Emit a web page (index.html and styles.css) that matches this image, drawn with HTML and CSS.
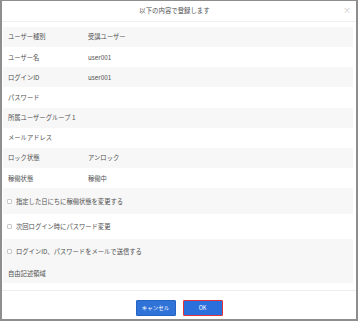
FILE: index.html
```html
<!DOCTYPE html>
<html lang="ja">
<head>
<meta charset="utf-8">
<link rel="stylesheet" href="styles.css">
</head>
<body>
<div class="modal">
  <div class="header">
    <span class="title">以下の内容で登録します</span>
    <span class="close">×</span>
  </div>
  <div class="body">
    <div class="row alt"><span class="label">ユーザー種別</span><span class="value">受講ユーザー</span></div>
    <div class="row"><span class="label">ユーザー名</span><span class="value">user001</span></div>
    <div class="row alt"><span class="label">ログインID</span><span class="value">user001</span></div>
    <div class="row"><span class="label">パスワード</span><span class="value"></span></div>
    <div class="row alt"><span class="label">所属ユーザーグループ 1</span><span class="value"></span></div>
    <div class="row"><span class="label">メールアドレス</span><span class="value"></span></div>
    <div class="row alt"><span class="label">ロック状態</span><span class="value">アンロック</span></div>
    <div class="row"><span class="label">稼働状態</span><span class="value">稼働中</span></div>
    <div class="row check alt c1"><span class="box"></span><span>指定した日にちに稼働状態を変更する</span></div>
    <div class="row check c2"><span class="box"></span><span>次回ログイン時にパスワード変更</span></div>
    <div class="group alt">
      <div class="row check c3"><span class="box"></span><span>ログインID、パスワードをメールで送信する</span></div>
      <div class="row free"><span class="label">自由記述領域</span></div>
    </div>
  </div>
  <div class="footer">
    <button class="btn cancel">キャンセル</button>
    <button class="btn ok">OK</button>
  </div>
</div>
</body>
</html>
```

FILE: styles.css
```css
* { box-sizing: border-box; }
html, body { margin: 0; padding: 0; background: #fff; }
body {
  font-family: "Noto Sans CJK JP", "Noto Sans", sans-serif;
  color: #505050;
}
.modal {
  width: 358px;
  height: 321px;
  border: 2px solid #8e8e8e;
  border-top-width: 1px;
  background: #fff;
  display: flex;
  flex-direction: column;
}
.header {
  height: 21px;
  border-bottom: 1px solid #efefef;
  display: flex;
  align-items: center;
  justify-content: center;
  position: relative;
  padding-right: 9px;
}
.title {
  font-size: 6.4px;
  color: #505050;
}
.close {
  position: absolute;
  right: 5px;
  top: 4px;
  font-size: 8px;
  color: #c4c4c4;
  line-height: 10px;
}
.body {
  padding: 5px 3px 7px 1px;
  flex: 1;
  display: flex;
  flex-direction: column;
}
.row {
  height: 20.2px;
  display: flex;
  align-items: center;
  padding-left: 5px;
  font-size: 6.3px;
}
.alt { background: #f7f7f7; }
.group .row { background: transparent; }
.label { width: 80px; color: #505050; }
.value { color: #505050; }
.check { gap: 4px; padding-left: 4px; }
.c1 { height: 26px; }
.c2 { height: 25px; }
.c3 { height: 24px; }
.free { height: 20px; padding-left: 5px; }
.box {
  width: 5px;
  height: 5px;
  border: 0.7px solid #c8c8c8;
  background: #fff;
  border-radius: 1px;
}
.footer {
  border-top: 1px solid #eeeeee;
  display: flex;
  justify-content: center;
  align-items: flex-start;
  gap: 7px;
  padding-top: 9px;
  height: 29px;
}
.btn {
  width: 40px;
  height: 16px;
  font-family: "Noto Sans CJK JP", "Noto Sans", sans-serif;
  font-size: 5.5px;
  color: #fff;
  padding: 0;
  border-radius: 1px;
  display: flex;
  align-items: center;
  justify-content: center;
}
.cancel {
  background: #2f73d9;
  border: 1px solid #2563c4;
}
.ok {
  background: #2b6fdc;
  border: 1.5px solid #e2323a;
}
```
